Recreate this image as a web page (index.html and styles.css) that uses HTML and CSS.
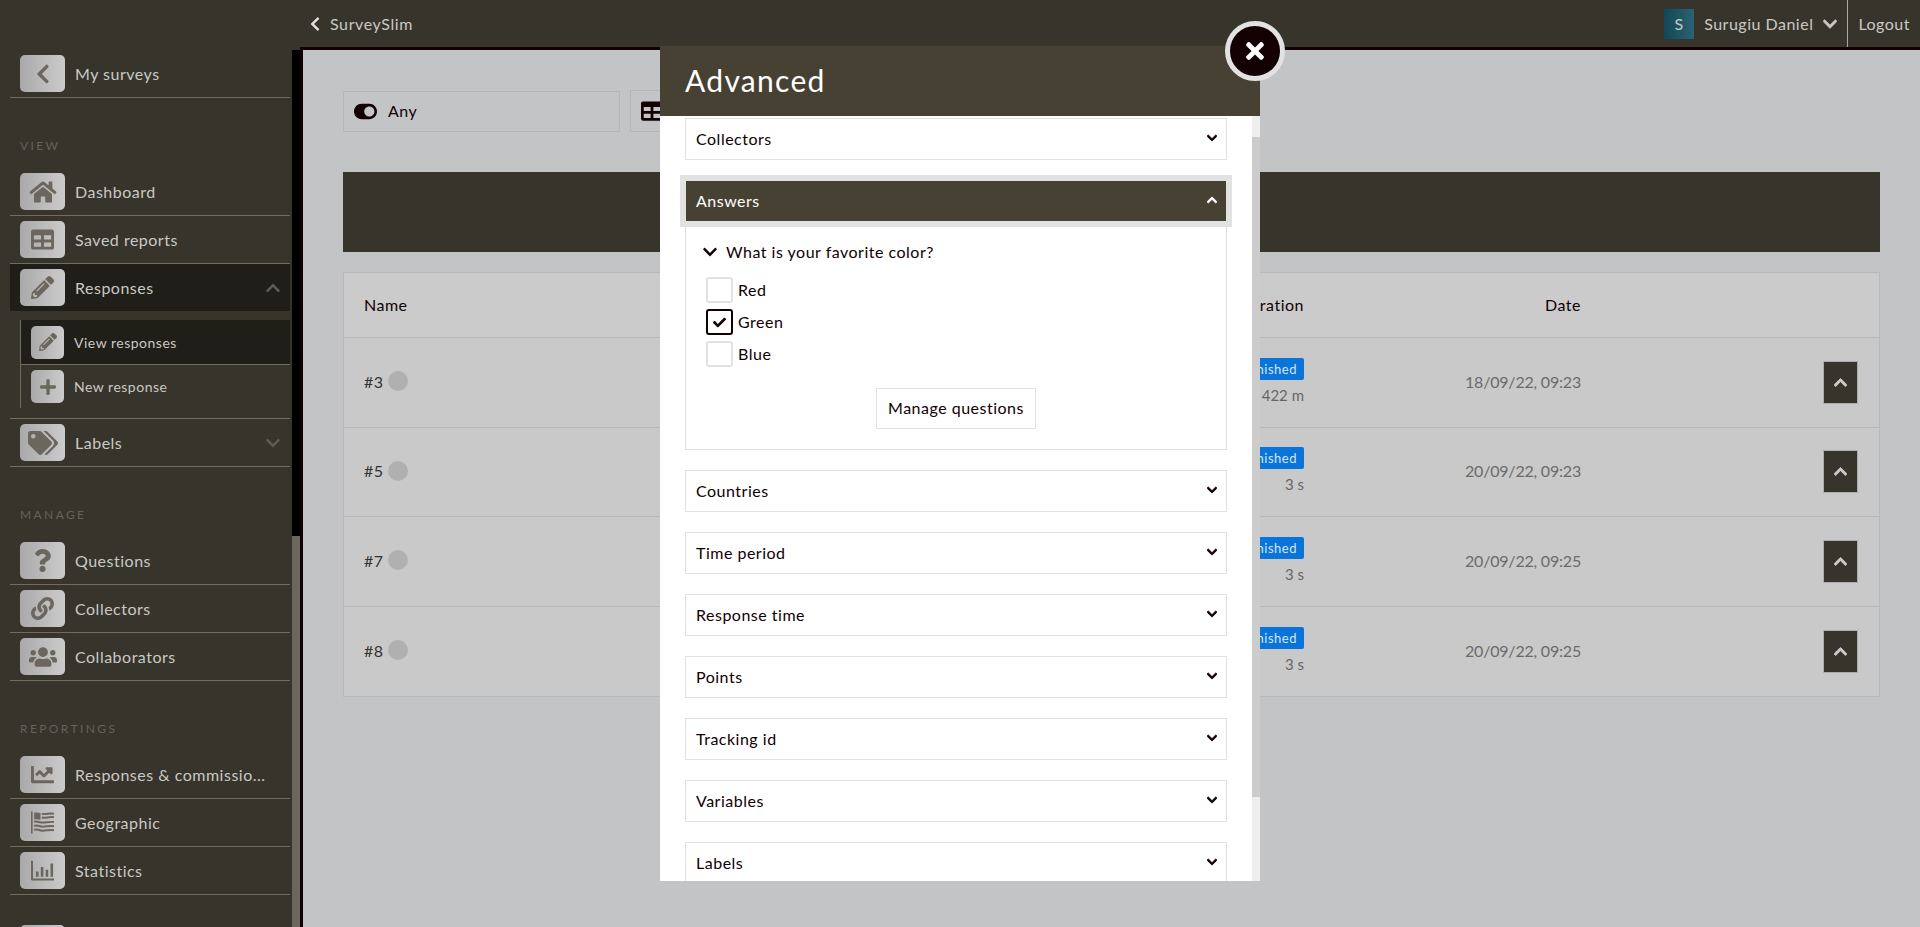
FILE: index.html
```html
<!DOCTYPE HTML>
<html>

<head>
  <meta charset="utf-8">
  <title>SurveySlim</title>
  <link rel="stylesheet" href="styles.css">
</head>

<body>

  <!-- icons -->
  <svg class="defs" xmlns="http://www.w3.org/2000/svg">
    <symbol id="i-left" viewBox="0 0 320 512"><path d="M34.52 239.03L228.87 44.69c9.37-9.37 24.57-9.37 33.94 0l22.67 22.67c9.36 9.36 9.37 24.52.04 33.9L131.49 256l154.02 154.75c9.34 9.38 9.32 24.54-.04 33.9l-22.67 22.67c-9.37 9.37-24.57 9.37-33.94 0L34.52 272.97c-9.37-9.37-9.37-24.57 0-33.94z"/></symbol>
    <symbol id="i-down" viewBox="0 0 448 512"><path d="M207.029 381.476L12.686 187.132c-9.373-9.373-9.373-24.569 0-33.941l22.667-22.667c9.357-9.357 24.522-9.375 33.901-.04L224 284.505l154.745-154.021c9.379-9.335 24.544-9.317 33.901.04l22.667 22.667c9.373 9.373 9.373 24.569 0 33.941L240.971 381.476c-9.373 9.372-24.569 9.372-33.942 0z"/></symbol>
    <symbol id="i-up" viewBox="0 0 448 512"><path d="M240.971 130.524l194.343 194.343c9.373 9.373 9.373 24.569 0 33.941l-22.667 22.667c-9.357 9.357-24.522 9.375-33.901.04L224 227.495 69.255 381.516c-9.379 9.335-24.544 9.317-33.901-.04l-22.667-22.667c-9.373-9.373-9.373-24.569 0-33.941L207.03 130.525c9.372-9.373 24.568-9.373 33.941-.001z"/></symbol>
    <symbol id="i-home" viewBox="0 0 576 512"><path d="M280.37 148.26L96 300.11V464a16 16 0 0 0 16 16l112.06-.29a16 16 0 0 0 15.92-16V368a16 16 0 0 1 16-16h64a16 16 0 0 1 16 16v95.64a16 16 0 0 0 16 16.05L464 480a16 16 0 0 0 16-16V300L295.67 148.26a12.19 12.19 0 0 0-15.3 0zM571.6 251.47L488 182.56V44.05a12 12 0 0 0-12-12h-56a12 12 0 0 0-12 12v72.61L318.47 43a48 48 0 0 0-61 0L4.34 251.47a12 12 0 0 0-1.6 16.9l25.5 31A12 12 0 0 0 45.15 301l235.22-193.74a12.19 12.19 0 0 1 15.3 0L530.9 301a12 12 0 0 0 16.9-1.6l25.5-31a12 12 0 0 0-1.7-16.93z"/></symbol>
    <symbol id="i-table" viewBox="0 0 512 512"><path d="M464 32H48C21.49 32 0 53.49 0 80v352c0 26.51 21.49 48 48 48h416c26.51 0 48-21.49 48-48V80c0-26.51-21.49-48-48-48zM224 416H64v-96h160v96zm0-160H64v-96h160v96zm224 160H288v-96h160v96zm0-160H288v-96h160v96z"/></symbol>
    <symbol id="i-pencil" viewBox="0 0 512 512"><path d="M497.9 142.1l-46.1 46.1c-4.7 4.7-12.3 4.7-17 0l-111-111c-4.7-4.7-4.7-12.3 0-17l46.1-46.1c18.7-18.7 49.1-18.7 67.9 0l60.1 60.1c18.8 18.7 18.8 49.1 0 67.9zM284.2 99.8L21.6 362.4.4 483.9c-2.9 16.4 11.4 30.6 27.8 27.8l121.5-21.3 262.6-262.6c4.7-4.7 4.7-12.3 0-17l-111-111c-4.8-4.7-12.4-4.7-17.1 0zM124.1 339.9c-5.5-5.5-5.5-14.3 0-19.8l154-154c5.5-5.5 14.3-5.5 19.8 0s5.5 14.3 0 19.8l-154 154c-5.5 5.5-14.3 5.5-19.8 0zM88 424h48v36.3l-64.5 11.3-31.1-31.1L51.7 376H88v48z"/></symbol>
    <symbol id="i-plus" viewBox="0 0 448 512"><path d="M416 208H272V64c0-17.67-14.33-32-32-32h-32c-17.67 0-32 14.33-32 32v144H32c-17.67 0-32 14.33-32 32v32c0 17.67 14.33 32 32 32h144v144c0 17.67 14.33 32 32 32h32c17.67 0 32-14.33 32-32V304h144c17.67 0 32-14.33 32-32v-32c0-17.67-14.33-32-32-32z"/></symbol>
    <symbol id="i-tags" viewBox="0 0 640 512"><path d="M497.941 225.941L286.059 14.059A48 48 0 0 0 252.118 0H48C21.49 0 0 21.49 0 48v204.118a48 48 0 0 0 14.059 33.941l211.882 211.882c18.744 18.745 49.136 18.746 67.882 0l204.118-204.118c18.745-18.745 18.745-49.137 0-67.882zM112 160c-26.51 0-48-21.49-48-48s21.49-48 48-48 48 21.49 48 48-21.49 48-48 48zm513.941 133.823L421.823 497.941c-18.745 18.745-49.137 18.745-67.882 0l-.36-.36L527.64 323.522c16.999-16.999 26.36-39.6 26.36-63.64s-9.362-46.641-26.36-63.64L331.397 0h48.721a48 48 0 0 1 33.941 14.059l211.882 211.882c18.745 18.745 18.745 49.137 0 67.882z"/></symbol>
    <symbol id="i-question" viewBox="0 0 384 512"><path d="M202.021 0C122.202 0 70.503 32.703 29.914 91.026c-7.363 10.58-5.093 25.086 5.178 32.874l43.138 32.709c10.373 7.865 25.132 6.026 33.253-4.148 25.049-31.381 43.63-49.449 82.757-49.449 30.764 0 68.816 19.799 68.816 49.631 0 22.552-18.617 34.134-48.993 51.164-35.423 19.86-82.299 44.576-82.299 106.405V320c0 13.255 10.745 24 24 24h72.471c13.255 0 24-10.745 24-24v-5.773c0-42.86 125.268-44.645 125.268-160.627C377.504 66.256 286.902 0 202.021 0zM192 373.459c-38.196 0-69.271 31.075-69.271 69.271 0 38.195 31.075 69.27 69.271 69.27s69.271-31.075 69.271-69.271-31.075-69.27-69.271-69.27z"/></symbol>
    <symbol id="i-link" viewBox="0 0 512 512"><path d="M326.612 185.391c59.747 59.809 58.927 155.698.36 214.59-.11.12-.24.25-.36.37l-67.2 67.2c-59.27 59.27-155.699 59.262-214.96 0-59.27-59.26-59.27-155.7 0-214.96l37.106-37.106c9.84-9.84 26.786-3.3 27.294 10.606.648 17.722 3.826 35.527 9.69 52.721 1.986 5.822.567 12.262-3.783 16.612l-13.087 13.087c-28.026 28.026-28.905 73.66-1.155 101.96 28.024 28.579 74.086 28.749 102.325.51l67.2-67.19c28.191-28.191 28.073-73.757 0-101.83-3.701-3.694-7.429-6.564-10.341-8.569a16.037 16.037 0 0 1-6.947-12.606c-.396-10.567 3.348-21.456 11.698-29.806l21.054-21.055c5.521-5.521 14.182-6.199 20.584-1.731a152.482 152.482 0 0 1 20.522 17.197zM467.547 44.449c-59.261-59.262-155.69-59.27-214.96 0l-67.2 67.2c-.12.12-.25.25-.36.37-58.566 58.892-59.387 154.781.36 214.59a152.454 152.454 0 0 0 20.521 17.196c6.402 4.468 15.064 3.789 20.584-1.731l21.054-21.055c8.35-8.35 12.094-19.239 11.698-29.806a16.037 16.037 0 0 0-6.947-12.606c-2.912-2.005-6.64-4.875-10.341-8.569-28.073-28.073-28.191-73.639 0-101.83l67.2-67.19c28.239-28.239 74.3-28.069 102.325.51 27.75 28.3 26.872 73.934-1.155 101.96l-13.087 13.087c-4.35 4.35-5.769 10.79-3.783 16.612 5.864 17.194 9.042 34.999 9.69 52.721.509 13.906 17.454 20.446 27.294 10.606l37.106-37.106c59.271-59.259 59.271-155.699.001-214.959z"/></symbol>
    <symbol id="i-users" viewBox="0 0 640 512"><path d="M96 224c35.3 0 64-28.7 64-64s-28.7-64-64-64-64 28.7-64 64 28.7 64 64 64zm448 0c35.3 0 64-28.7 64-64s-28.7-64-64-64-64 28.7-64 64 28.7 64 64 64zm32 32h-64c-17.6 0-33.5 7.1-45.1 18.6 40.3 22.1 68.9 62 75.1 109.4h66c17.7 0 32-14.3 32-32v-32c0-35.3-28.7-64-64-64zm-256 0c61.9 0 112-50.1 112-112S381.9 32 320 32 208 82.1 208 144s50.1 112 112 112zm76.8 32h-8.3c-20.8 10-43.9 16-68.5 16s-47.6-6-68.5-16h-8.3C179.6 288 128 339.6 128 403.2V432c0 26.5 21.5 48 48 48h288c26.5 0 48-21.5 48-48v-28.8c0-63.6-51.6-115.2-115.2-115.2zm-223.7-13.4C161.5 263.1 145.6 256 128 256H64c-35.3 0-64 28.7-64 64v32c0 17.7 14.3 32 32 32h65.9c6.3-47.4 34.9-87.3 75.2-109.4z"/></symbol>
    <symbol id="i-line" viewBox="0 0 512 512"><path d="M496 384H64V80c0-8.84-7.16-16-16-16H16C7.16 64 0 71.16 0 80v336c0 17.67 14.33 32 32 32h464c8.84 0 16-7.16 16-16v-32c0-8.84-7.16-16-16-16zM464 96H345.94c-21.38 0-32.09 25.85-16.97 40.97l32.4 32.4L288 242.75l-73.37-73.37c-12.5-12.5-32.76-12.5-45.25 0l-68.69 68.69c-6.25 6.25-6.25 16.38 0 22.63l22.62 22.62c6.25 6.25 16.38 6.25 22.63 0L192 237.25l73.37 73.37c12.5 12.5 32.76 12.5 45.25 0l96-96 32.4 32.4c15.12 15.12 40.97 4.41 40.97-16.97V112c.01-8.84-7.15-16-15.99-16z"/></symbol>
    <symbol id="i-flag" viewBox="0 0 512 512"><path d="M0 10h36v492H0z"/><path d="M70 40c50-14 100-4 140 6v150c-40-12-90-22-140-8z"/><path fill="none" stroke="currentColor" stroke-width="44" d="M240 66c80 18 180-26 272-6M240 146c80 18 180-26 272-6M70 240c70-22 110 12 180 18s180-32 262-10M70 330c70-22 110 12 180 18s180-32 262-10M70 420c70-22 110 12 180 18s180-32 262-10"/></symbol>
    <symbol id="i-bars" viewBox="0 0 512 512"><path d="M0 40h44v396h468v44H32a32 32 0 0 1-32-32zM110 280h58v116h-58zM218 180h58v216h-58zM326 240h58v156h-58zM434 100h58v296h-58z"/></symbol>
    <symbol id="i-check" viewBox="0 0 512 512"><path d="M173.898 439.404l-166.4-166.4c-9.997-9.997-9.997-26.206 0-36.204l36.203-36.204c9.997-9.998 26.207-9.998 36.204 0L192 312.69 432.095 72.596c9.997-9.997 26.207-9.997 36.204 0l36.203 36.204c9.997 9.997 9.997 26.206 0 36.204l-294.4 294.401c-9.998 9.997-26.207 9.997-36.204-.001z"/></symbol>
    <symbol id="i-times" viewBox="0 0 352 512"><path d="M242.72 256l100.07-100.07c12.28-12.28 12.28-32.19 0-44.48l-22.24-22.24c-12.28-12.28-32.19-12.28-44.48 0L176 189.28 75.93 89.21c-12.28-12.28-32.19-12.28-44.48 0L9.21 111.45c-12.28 12.28-12.28 32.19 0 44.48L109.28 256 9.21 356.07c-12.28 12.28-12.28 32.19 0 44.48l22.24 22.24c12.28 12.28 32.2 12.28 44.48 0L176 322.72l100.07 100.07c12.28 12.28 32.2 12.28 44.48 0l22.24-22.24c12.28-12.28 12.28-32.19 0-44.48L242.72 256z"/></symbol>
    <symbol id="i-toggle" viewBox="0 0 576 512"><path d="M384 64H192C86 64 0 150 0 256s86 192 192 192h192c106 0 192-86 192-192S490 64 384 64zm0 320c-70.8 0-128-57.3-128-128 0-70.8 57.3-128 128-128 70.8 0 128 57.3 128 128 0 70.8-57.3 128-128 128z"/></symbol>
  </svg>

  <!-- Sidebar -->
  <aside class="sidebar">
    <nav class="side-list">
      <a class="side-item"><span class="side-icon"><svg class="ico-back"><use href="#i-left"/></svg></span><span>My surveys</span></a>

      <div class="side-title">VIEW</div>
      <a class="side-item"><span class="side-icon"><svg class="ico-home"><use href="#i-home"/></svg></span><span>Dashboard</span></a>
      <a class="side-item"><span class="side-icon"><svg class="ico-md"><use href="#i-table"/></svg></span><span>Saved reports</span></a>
      <a class="side-item active"><span class="side-icon"><svg class="ico-md"><use href="#i-pencil"/></svg></span><span>Responses</span><svg class="side-arrow"><use href="#i-up"/></svg></a>
      <div class="side-group">
        <ul class="side-sub">
          <li class="sub-item current"><span class="side-icon small"><svg class="ico-sm"><use href="#i-pencil"/></svg></span><span>View responses</span></li>
          <li class="sub-item"><span class="side-icon small"><svg class="ico-sm"><use href="#i-plus"/></svg></span><span>New response</span></li>
        </ul>
      </div>
      <a class="side-item"><span class="side-icon"><svg class="ico-tags"><use href="#i-tags"/></svg></span><span>Labels</span><svg class="side-arrow"><use href="#i-down"/></svg></a>

      <div class="side-title">MANAGE</div>
      <a class="side-item"><span class="side-icon"><svg class="ico-md"><use href="#i-question"/></svg></span><span>Questions</span></a>
      <a class="side-item"><span class="side-icon"><svg class="ico-md"><use href="#i-link"/></svg></span><span>Collectors</span></a>
      <a class="side-item"><span class="side-icon"><svg class="ico-home"><use href="#i-users"/></svg></span><span>Collaborators</span></a>

      <div class="side-title">REPORTINGS</div>
      <a class="side-item"><span class="side-icon"><svg class="ico-md"><use href="#i-line"/></svg></span><span>Responses &amp; commissio...</span></a>
      <a class="side-item"><span class="side-icon"><svg class="ico-md"><use href="#i-flag"/></svg></span><span>Geographic</span></a>
      <a class="side-item"><span class="side-icon"><svg class="ico-md"><use href="#i-bars"/></svg></span><span>Statistics</span></a>
      <a class="side-item next"><span class="side-icon"></span></a>
    </nav>
    <div class="side-scroll"><div class="side-thumb"></div></div>
  </aside>

  <div class="page">
    <!-- Top bar -->
    <header class="topbar">
      <svg class="top-back"><use href="#i-left"/></svg>
      <span class="top-name">SurveySlim</span>
      <span class="avatar">S</span>
      <span class="top-user">Surugiu Daniel</span>
      <svg class="top-arrow"><use href="#i-down"/></svg>
      <a class="logout">Logout</a>
    </header>

    <!-- Responses list -->
    <main class="main">
      <div class="filters">
        <div class="filter low"><svg class="ico-toggle"><use href="#i-toggle"/></svg><span class="txt">Any</span></div>
        <div class="filter"><svg class="ico-tbl"><use href="#i-table"/></svg><span class="txt">Table</span></div>
      </div>

      <div class="banner"></div>

      <div class="table">
        <div class="row head">
          <div class="txt">Name</div>
          <div class="txt right">Duration</div>
          <div class="txt right">Date</div>
          <div></div>
        </div>
        <div class="row">
          <div class="txt name">#3 <span class="dot"></span></div>
          <div class="right status"><span class="badge">Finished</span><div class="sub">422 m</div></div>
          <div class="txt right date">18/09/22, 09:23</div>
          <div class="act"><button class="open"><svg><use href="#i-up"/></svg></button></div>
        </div>
        <div class="row">
          <div class="txt name">#5 <span class="dot"></span></div>
          <div class="right status"><span class="badge">Finished</span><div class="sub">3 s</div></div>
          <div class="txt right date">20/09/22, 09:23</div>
          <div class="act"><button class="open"><svg><use href="#i-up"/></svg></button></div>
        </div>
        <div class="row">
          <div class="txt name">#7 <span class="dot"></span></div>
          <div class="right status"><span class="badge">Finished</span><div class="sub">3 s</div></div>
          <div class="txt right date">20/09/22, 09:25</div>
          <div class="act"><button class="open"><svg><use href="#i-up"/></svg></button></div>
        </div>
        <div class="row">
          <div class="txt name">#8 <span class="dot"></span></div>
          <div class="right status"><span class="badge">Finished</span><div class="sub">3 s</div></div>
          <div class="txt right date">20/09/22, 09:25</div>
          <div class="act"><button class="open"><svg><use href="#i-up"/></svg></button></div>
        </div>
      </div>
    </main>
  </div>

  <!-- Advanced modal -->
  <section class="modal">
    <button class="modal-close"><svg><use href="#i-times"/></svg></button>
    <h2 class="modal-head">Advanced</h2>
    <div class="modal-body">
      <div class="modal-list">
        <div class="acc">Collectors<svg><use href="#i-down"/></svg></div>

        <div>
          <div class="acc-open">Answers<svg><use href="#i-up"/></svg></div>
          <div class="acc-panel">
            <div class="question"><svg><use href="#i-down"/></svg><span class="txt">What is your favorite color?</span></div>
            <div class="options">
              <label class="option"><span class="box"></span><span class="txt">Red</span></label>
              <label class="option"><span class="box on"><svg><use href="#i-check"/></svg></span><span class="txt">Green</span></label>
              <label class="option"><span class="box"></span><span class="txt">Blue</span></label>
            </div>
            <button class="manage"><span class="txt">Manage questions</span></button>
          </div>
        </div>

        <div class="acc">Countries<svg><use href="#i-down"/></svg></div>
        <div class="acc">Time period<svg><use href="#i-down"/></svg></div>
        <div class="acc">Response time<svg><use href="#i-down"/></svg></div>
        <div class="acc">Points<svg><use href="#i-down"/></svg></div>
        <div class="acc">Tracking id<svg><use href="#i-down"/></svg></div>
        <div class="acc">Variables<svg><use href="#i-down"/></svg></div>
        <div class="acc">Labels<svg><use href="#i-down"/></svg></div>
      </div>
      <div class="modal-scroll"><div class="modal-thumb"></div></div>
    </div>
  </section>

</body>
</html>
```

FILE: styles.css
```css
* {
  box-sizing: border-box;
}

html, body {
  height: 100%;
}

body {
  margin: 0;
  display: flex;
  position: relative;
  overflow: hidden;
  background: #c3c4c6;
  font-family: "Lato", "Open Sans", sans-serif;
  font-size: 16px;
  letter-spacing: 0.5px;
  color: #120003;
}

.defs {
  display: none;
}

svg {
  fill: currentColor;
  display: block;
}

/* lato sits a bit lower than the rest of the row */
.txt {
  display: block;
  padding-bottom: 2px;
}

/* Sidebar */
.sidebar {
  width: 300px;
  flex: none;
  display: flex;
  height: 927px;
  overflow: hidden;
  background: #37342b;
}

.side-list {
  width: 292px;
  flex: none;
  padding: 50px 2px 0 10px;
  color: #c9c9c4;
}

.side-scroll {
  width: 8px;
  margin-top: 50px;
  background: #000;
  display: flex;
  flex-direction: column;
  justify-content: flex-end;
}

.side-thumb {
  height: 391px;
  background: #6b675f;
}

.side-item {
  display: flex;
  align-items: center;
  height: 48px;
  padding: 0 10px;
  gap: 10px;
  border-bottom: 1px solid #6f6c60;
}

.side-item.active {
  height: 47px;
  margin-bottom: 1px;
  background: #1f1e19;
  border-bottom: 0;
}

.side-item.next {
  margin-top: 25px;
}

.side-icon {
  width: 45px;
  height: 37px;
  flex: none;
  display: flex;
  align-items: center;
  justify-content: center;
  border-radius: 5px;
  color: #6b675f;
  background: linear-gradient(90deg, #a9a9a9, #cbcbcb);
}

.side-icon.small {
  width: 33px;
  height: 33px;
}

.ico-back { width: 14px; height: 22px; }
.ico-home { width: 28px; height: 24px; }
.ico-md { width: 23px; height: 23px; }
.ico-sm { width: 18px; height: 18px; }
.ico-tags { width: 30px; height: 24px; }

.side-arrow {
  width: 14px;
  height: 16px;
  margin-left: auto;
  color: #5f5c53;
}

.side-title {
  height: 70px;
  padding: 40px 10px 0;
  line-height: 16px;
  font-size: 12px;
  letter-spacing: 2.4px;
  color: #64625a;
}

.side-group {
  padding: 8px 0 10px;
  border-bottom: 1px solid #6f6c60;
}

.side-sub {
  list-style: none;
  margin: 0 0 0 10px;
  padding: 0;
  border-left: 1px solid #6f6c60;
}

.sub-item {
  display: flex;
  align-items: center;
  gap: 10px;
  height: 43px;
  padding-left: 10px;
  font-size: 14px;
}

.sub-item.current {
  height: 45px;
  background: #1f1e19;
  border-bottom: 1px solid #6f6c60;
}

/* Top bar */
.page {
  flex: 1;
  min-width: 0;
  display: flex;
  flex-direction: column;
}

.topbar {
  height: 47px;
  flex: none;
  display: flex;
  align-items: center;
  padding-left: 10px;
  background: #37342b;
  color: #c9c9c4;
}

.top-back {
  width: 10px;
  height: 16px;
  margin-right: 10px;
  color: #e0e0dc;
}

.top-name {
  letter-spacing: 0.6px;
}

.avatar {
  width: 30px;
  height: 30px;
  margin-left: auto;
  display: flex;
  align-items: center;
  justify-content: center;
  background: linear-gradient(90deg, #124858, #2b6373);
}

.top-user {
  margin-left: 10px;
}

.top-arrow {
  width: 14px;
  height: 16px;
  margin-left: 10px;
  stroke: currentColor;
  stroke-width: 20px;
}

.logout {
  align-self: stretch;
  display: flex;
  align-items: center;
  margin-left: 10px;
  padding: 0 10px;
  border-left: 1px solid #a9a8a2;
}

/* Main */
.main {
  flex: 1;
  padding: 40px 40px 0;
  background: #c3c4c6;
  border-top: 3px solid #120003;
  border-left: 3px solid #120003;
}

.filters {
  display: flex;
  align-items: flex-end;
  gap: 10px;
  height: 42px;
}

.filter {
  width: 277px;
  height: 42px;
  display: flex;
  align-items: center;
  gap: 11px;
  padding-left: 10px;
  border: 1px solid #b6b6b6;
}

.filter.low {
  height: 41px;
}

.ico-toggle {
  width: 23px;
  height: 21px;
}

.ico-tbl {
  width: 22px;
  height: 22px;
}

.banner {
  height: 80px;
  margin: 40px 0 20px;
  background: #37342b;
}

.table {
  border: 1px solid #b8b8b8;
  background: #c9c9c9;
}

.row {
  display: grid;
  grid-template-columns: 1fr 200px 277px 277px;
  align-items: center;
  height: 89.5px;
  padding: 0 21px 0 20px;
  border-bottom: 1px solid #b8b8b8;
  color: #666;
}

.row:last-child {
  border-bottom: 0;
}

.row.head {
  height: 65px;
  color: #120003;
  background: #cbcbcb;
}

.name {
  display: flex;
  align-items: center;
  gap: 4px;
  color: #333;
}

.dot {
  width: 20px;
  height: 20px;
  border-radius: 50%;
  background: #b0b0b0;
}

.right {
  text-align: right;
}

.status {
  padding-bottom: 3px;
}

.date {
  letter-spacing: -0.2px;
  color: #6b6b6b;
}

.badge {
  display: inline-block;
  height: 22px;
  padding: 0 7px;
  line-height: 22px;
  font-size: 13px;
  border-radius: 2px;
  color: #d5e6f5;
  background: #0a74da;
}

.sub {
  margin-top: 6px;
  font-size: 15px;
  letter-spacing: 0;
}

.act {
  display: flex;
  justify-content: flex-end;
}

.open {
  width: 35px;
  height: 43px;
  padding: 0;
  display: flex;
  align-items: center;
  justify-content: center;
  color: #c9c9c9;
  background: #37342b;
  border: 1px solid #adadad;
}

.open svg {
  width: 13px;
  height: 15px;
  stroke: currentColor;
  stroke-width: 30px;
}

/* Modal */
.modal {
  position: absolute;
  left: 660px;
  top: 46px;
  width: 600px;
  height: 835px;
  display: flex;
  flex-direction: column;
  background: #fff;
}

.modal-close {
  position: absolute;
  right: -25px;
  top: -25px;
  z-index: 3;
  width: 60px;
  height: 60px;
  padding: 0;
  display: flex;
  align-items: center;
  justify-content: center;
  border-radius: 50%;
  color: #fff;
  background: #120003;
  border: 5px solid #e2e2e2;
}

.modal-close svg {
  width: 18px;
  height: 26px;
}

.modal-head {
  height: 70px;
  flex: none;
  margin: 0;
  padding: 0 25px;
  line-height: 68px;
  font-size: 30px;
  font-weight: 400;
  letter-spacing: 1.3px;
  color: #fff;
  background: #474133;
}

.modal-body {
  flex: 1;
  min-height: 0;
  display: flex;
  overflow: hidden;
}

.modal-list {
  width: 592px;
  flex: none;
  padding: 2px 25px 0;
  display: flex;
  flex-direction: column;
  gap: 20px;
}

.modal-scroll {
  width: 8px;
  padding-top: 21px;
  background: #eee;
}

.modal-thumb {
  height: 660px;
  background: #ccc;
}

.acc {
  height: 42px;
  flex: none;
  display: flex;
  align-items: center;
  justify-content: space-between;
  padding: 0 9px 2px 10px;
  border: 1px solid #e2e2e2;
}

.acc svg,
.acc-open svg {
  width: 10px;
  height: 12px;
  stroke: currentColor;
  stroke-width: 40px;
}

.acc-open {
  position: relative;
  z-index: 1;
  height: 40px;
  margin: 1px 1px 0;
  display: flex;
  align-items: center;
  justify-content: space-between;
  padding: 0 9px 2px 10px;
  color: #fff;
  background: #474133;
  box-shadow: 0 0 0 6px #e2e2e2;
}

.acc-panel {
  padding: 20px 20px;
  display: flex;
  flex-direction: column;
  border: 1px solid #e2e2e2;
  border-top: 0;
}

.question {
  display: flex;
  align-items: center;
  gap: 9px;
  height: 22px;
  margin-left: -3px;
}

.question svg {
  width: 14px;
  height: 16px;
}

.options {
  margin-top: 14px;
  display: flex;
  flex-direction: column;
  gap: 6px;
}

.option {
  display: flex;
  align-items: center;
  gap: 5px;
  height: 26px;
}

.box {
  width: 27px;
  height: 26px;
  display: flex;
  align-items: center;
  justify-content: center;
  border: 2px solid #e2e2e2;
  border-radius: 3px;
}

.box.on {
  border-color: #120003;
}

.box svg {
  width: 13px;
  height: 13px;
}

.manage {
  align-self: center;
  width: 160px;
  height: 41px;
  margin-top: 21px;
  padding: 0;
  font: inherit;
  letter-spacing: inherit;
  color: inherit;
  background: #fff;
  border: 1px solid #e2e2e2;
}
```
